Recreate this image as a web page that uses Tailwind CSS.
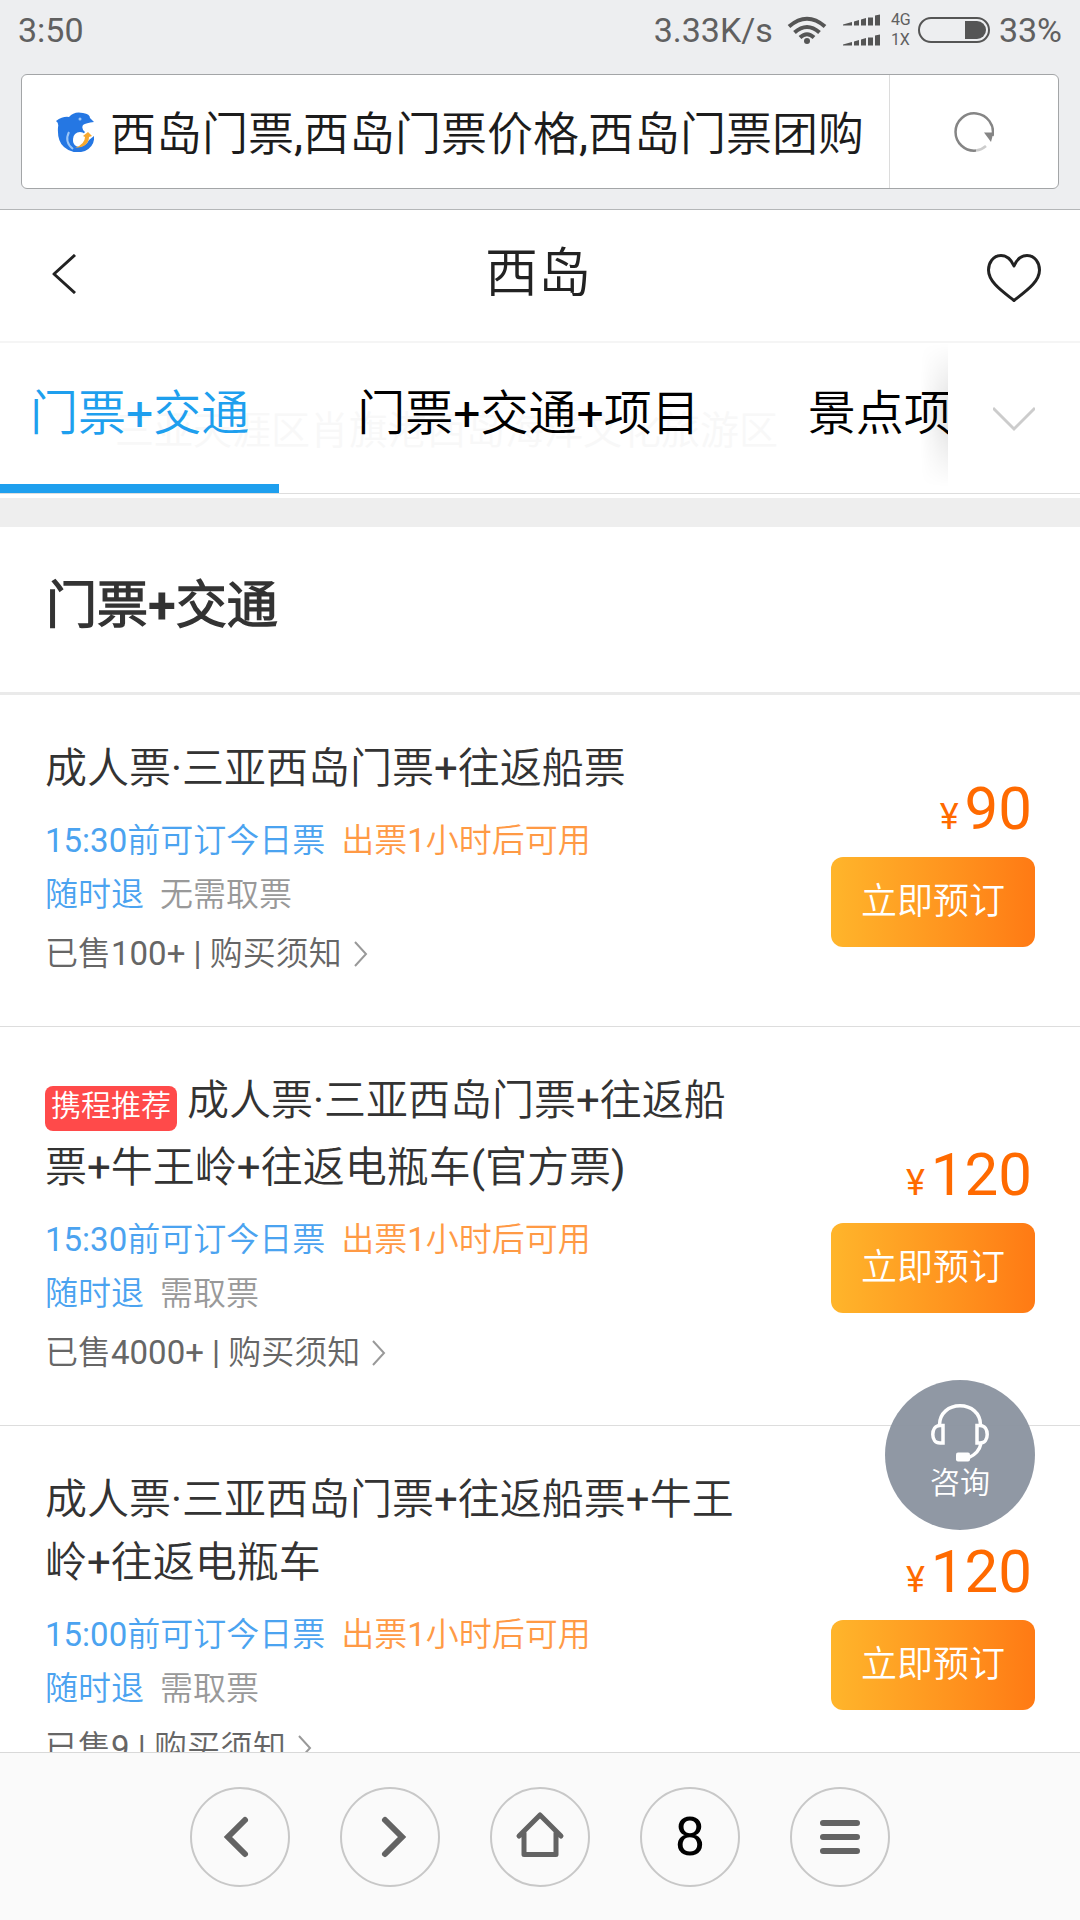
<!DOCTYPE html>
<html lang="zh-CN">
<head>
<meta charset="utf-8">
<meta name="viewport" content="width=device-width, initial-scale=1">
<title>西岛门票,西岛门票价格,西岛门票团购</title>
<script src="https://cdn.jsdelivr.net/npm/@tailwindcss/browser@4"></script>
</head>
<body class="flex h-screen flex-col overflow-hidden bg-white font-['Roboto','Noto_Sans_CJK_SC_DemiLight','Noto_Sans_CJK_SC',sans-serif] font-normal text-[#333]">

<!-- Status bar and address bar -->
<div class="shrink-0 border-b border-[#b4b6b8] bg-[#edeef0] px-[21px] pb-5">
  <div class="-mx-[3px] flex h-[74px] items-start justify-between pt-[10px] text-[34px] leading-10 text-[#606060]">
    <span>3:50</span>
    <div class="flex items-center">
      <span>3.33K/s</span>
      <svg class="ml-[14px] h-7 w-10" viewBox="0 0 40 28" fill="none" stroke="#555" stroke-width="4" aria-label="Wi-Fi">
        <path d="M2 10.500Q20-5 38 10.500M7.500 16.500Q20 5.500 32.500 16.500M13 21.500Q20 15 27 21.500" />
        <circle cx="20" cy="25" r="3" fill="#555" stroke="none" />
      </svg>
      <svg class="ml-4 h-8 w-[38px]" viewBox="0 0 38 32" fill="#555" aria-label="信号">
        <path id="bars" d="M0 10.500L9 8v3.500H0zM11 7.500l5-1.500v5.500h-5zM18 5.500L23 4v7.500h-5zM25 3.500h5v8h-5zM32 1.500L37 .5v11h-5z" />
        <use href="#bars" y="20" />
      </svg>
      <span class="ml-[10px] w-6 text-base leading-5"><span class="block">4G</span><span class="block">1X</span></span>
      <svg class="ml-[3px] h-7 w-[72px]" viewBox="0 0 72 28" aria-label="电池">
        <rect x="1" y="2" width="70" height="24" rx="12" fill="none" stroke="#555" stroke-width="2" />
        <path d="M47 5h12a9 9 0 0 1 0 18H47z" fill="#555" />
      </svg>
      <span class="ml-[9px]">33%</span>
    </div>
  </div>
  <div class="flex h-[115px] overflow-hidden rounded-md border border-[#a3a5a7] bg-white">
    <a href="#" class="flex min-w-0 flex-1 items-center border-r border-[#dcdcdc] pl-[34px] text-[#1c1c1c]">
      <svg class="mr-4 h-10 w-[38px] shrink-0" viewBox="0 0 38 40" aria-hidden="true">
        <path d="M0 9Q7 4 13 5Q18-1 27 1Q34 2 34 6L38 10Q30 11 27 13Q25 17 29 20L25 25Q21 23 17 28Q17 34 23 35Q30 34 33 28L38 24Q39 34 29 39Q17 43 8 35Q1 29 2 15Q3 11 0 9Z" fill="#2577e3" />
        <path d="M13 20Q8 30 17 37" fill="none" stroke="#9cc6f7" stroke-width="2" />
        <circle cx="24" cy="27" r="7" fill="#fff" />
        <path d="M27 24l5-4 4 4-3 1Q33 35 19 36 29 32 29 25z" fill="#f7a82e" />
        <circle cx="24" cy="7" r="1.500" fill="#9cc6f7" />
      </svg>
      <span class="truncate pt-1 text-[46px] leading-[60px]">西岛门票,西岛门票价格,西岛门票团购</span>
    </a>
    <button type="button" class="flex w-[168px] items-center justify-center" aria-label="刷新">
      <svg class="h-10 w-10" viewBox="0 0 40 40" fill="none" stroke="#858585" stroke-width="2.500">
        <path d="M38.500 24A18.700 18.700 0 1 0 22 38.600" />
        <path d="M22 38.600A18.700 18.700 0 0 0 32 34" stroke="#ccc" />
        <path d="M30 20.500h9.500L37 30z" fill="#858585" stroke="none" />
      </svg>
    </button>
  </div>
</div>

<main class="relative min-h-0 flex-1 overflow-hidden">
  <header class="flex h-[133px] items-center justify-between border-b-2 border-[#f5f5f5] px-10 pb-[3px]">
    <button type="button" class="flex h-12 w-12 items-center justify-center" aria-label="返回">
      <svg class="h-10 w-6" viewBox="0 0 24 40" fill="none" stroke="#222" stroke-width="3"><path d="M23 1L2 20l21 19" stroke-linejoin="round" /></svg>
    </button>
    <h1 class="text-[53px] leading-[60px] text-[#222]">西岛</h1>
    <button type="button" class="flex w-[52px] justify-center pt-2" aria-label="收藏">
      <svg class="h-12 w-[54px] shrink-0" viewBox="0 0 54 48" fill="none" stroke="#222" stroke-width="3" stroke-linejoin="round"><path d="M27 12C24 5 19 1.500 14 1.500 6 1.500 1.500 9 1.500 16 1.500 28 15 37 27 46.500 39 37 52.500 28 52.500 16 52.500 9 48 1.500 40 1.500 35 1.500 30 5 27 12z" /></svg>
    </button>
  </header>

  <nav class="relative mb-1 flex h-[151px] border-b border-[#ddd]" aria-label="分类">
    <p class="absolute top-[60px] left-[115px] text-[39px] leading-[56px] whitespace-nowrap text-[#f8f8f8]" aria-hidden="true">三亚天涯区肖旗港西岛海洋文化旅游区</p>
    <div class="relative flex min-w-0 flex-1 gap-12 overflow-hidden text-5xl leading-[141px] whitespace-nowrap text-black">
      <a href="#" class="shrink-0 border-b-9 border-[#1e9fee] px-[30px] text-[#1e9fee]" aria-current="page">门票+交通</a>
      <a href="#" class="shrink-0 px-[30px]">门票+交通+项目</a>
      <a href="#" class="shrink-0 px-[30px]">景点项目</a>
      <span class="absolute top-0 right-0 h-36 w-7 bg-linear-to-l from-black/10 to-transparent mask-y-from-60%"></span>
    </div>
    <button type="button" class="relative flex w-[132px] items-center justify-center" aria-label="展开">
      <svg class="h-7 w-[42px]" viewBox="0 0 42 28" fill="none" stroke="#ccc" stroke-width="3"><path d="M0 4l21 21L42 4" /></svg>
    </button>
  </nav>

  <div class="h-[29px] bg-[#eee]"></div>
  <h2 class="border-b-3 border-[#eaeaea] pt-[46px] pb-[53px] pl-[46px] text-[51px] leading-[66px] font-bold">门票+交通</h2>

  <ul>
    <li class="flex items-center gap-20 border-b border-[#ddd] pr-[45px] pl-[45px]">
      <div class="min-w-0 flex-1 pt-[42px] pb-[45px] text-[33px] leading-[54px]">
        <h3 class="mb-[14px] text-[42px] leading-[63px]">成人票·三亚西岛门票+往返船票</h3>
        <p class="flex gap-4"><span class="text-[#4ba3f0]">15:30前可订今日票</span><span class="text-[#ff9a45]">出票1小时后可用</span></p>
        <p class="flex gap-4"><span class="text-[#4ba3f0]">随时退</span><span class="text-[#999]">无需取票</span></p>
        <p class="mt-[5px] flex items-center text-[#666]">已售100+ |&nbsp;<a href="#" class="flex items-center gap-3">购买须知
          <svg class="h-[26px] w-[14px]" viewBox="0 0 14 26" fill="none" stroke="#999" stroke-width="2"><path d="M1 1l11 12L1 25" /></svg></a></p>
      </div>
      <div class="w-[204px]">
        <p class="mb-[13px] flex h-[70px] items-baseline justify-end gap-[6px] pr-[3px] text-[#ff6a00]"><span class="text-4xl leading-[70px]">¥</span><span class="text-6xl leading-[70px]">90</span></p>
        <button type="button" class="h-[90px] w-full rounded-xl bg-linear-to-r from-[#ffb52b] to-[#ff7a14] text-4xl text-white">立即预订</button>
      </div>
    </li>
    <li class="flex items-center gap-20 border-b border-[#ddd] pr-[45px] pl-[45px]">
      <div class="min-w-0 flex-1 pt-[42px] pb-[45px] text-[33px] leading-[54px]">
        <h3 class="mb-[14px] text-[42px] leading-[63px]"><span class="mr-[10px] mb-[5px] inline-block h-[45px] rounded-lg bg-[#ff4a4a] px-[6px] align-[-1px] text-3xl leading-10 text-white">携程推荐</span>成人票·三亚西岛门票+往返船票+牛王岭+往返电瓶车(官方票)</h3>
        <p class="flex gap-4"><span class="text-[#4ba3f0]">15:30前可订今日票</span><span class="text-[#ff9a45]">出票1小时后可用</span></p>
        <p class="flex gap-4"><span class="text-[#4ba3f0]">随时退</span><span class="text-[#999]">需取票</span></p>
        <p class="mt-[5px] flex items-center text-[#666]">已售4000+ |&nbsp;<a href="#" class="flex items-center gap-3">购买须知
          <svg class="h-[26px] w-[14px]" viewBox="0 0 14 26" fill="none" stroke="#999" stroke-width="2"><path d="M1 1l11 12L1 25" /></svg></a></p>
      </div>
      <div class="w-[204px]">
        <p class="mb-[13px] flex h-[70px] items-baseline justify-end gap-[6px] pr-[3px] text-[#ff6a00]"><span class="text-4xl leading-[70px]">¥</span><span class="text-6xl leading-[70px]">120</span></p>
        <button type="button" class="h-[90px] w-full rounded-xl bg-linear-to-r from-[#ffb52b] to-[#ff7a14] text-4xl text-white">立即预订</button>
      </div>
    </li>
    <li class="flex items-center gap-20 border-b border-[#ddd] pr-[45px] pl-[45px]">
      <div class="min-w-0 flex-1 pt-[42px] pb-[45px] text-[33px] leading-[54px]">
        <h3 class="mb-[14px] text-[42px] leading-[63px]">成人票·三亚西岛门票+往返船票+牛王岭+往返电瓶车</h3>
        <p class="flex gap-4"><span class="text-[#4ba3f0]">15:00前可订今日票</span><span class="text-[#ff9a45]">出票1小时后可用</span></p>
        <p class="flex gap-4"><span class="text-[#4ba3f0]">随时退</span><span class="text-[#999]">需取票</span></p>
        <p class="mt-[5px] flex items-center text-[#666]">已售9 |&nbsp;<a href="#" class="flex items-center gap-3">购买须知
          <svg class="h-[26px] w-[14px]" viewBox="0 0 14 26" fill="none" stroke="#999" stroke-width="2"><path d="M1 1l11 12L1 25" /></svg></a></p>
      </div>
      <div class="w-[204px]">
        <p class="mb-[13px] flex h-[70px] items-baseline justify-end gap-[6px] pr-[3px] text-[#ff6a00]"><span class="text-4xl leading-[70px]">¥</span><span class="text-6xl leading-[70px]">120</span></p>
        <button type="button" class="h-[90px] w-full rounded-xl bg-linear-to-r from-[#ffb52b] to-[#ff7a14] text-4xl text-white">立即预订</button>
      </div>
    </li>
  </ul>

  <!-- Floating help button -->
  <button type="button" class="absolute right-[45px] bottom-[222px] flex size-[150px] flex-col items-center rounded-full bg-[#8a929f]/95 pt-6 text-3xl leading-[42px] text-white">
    <svg class="h-[58px] w-[58px]" viewBox="0 0 58 58" fill="none" stroke="#fff" stroke-width="3.500" aria-hidden="true">
      <path d="M8.500 21C8.500 9 18 1.800 29 1.800S49.500 9 49.500 21" />
      <path d="M12 21.500v17.500H9c-5 0-7.200-4-7.200-8.500s2.200-9 7.200-9zM46 21.500v17.500h3c5 0 7.200-4 7.200-8.500s-2.200-9-7.200-9zM50 39.500Q48 49 38 53.500" />
      <rect x="25" y="48.500" width="14" height="9" rx="2" fill="#fff" stroke="none" />
    </svg>
    咨询
  </button>
</main>

<!-- Browser toolbar -->
<nav class="flex h-[168px] shrink-0 items-center justify-center gap-[50px] border-t border-[#d9d9d9] bg-[#fafafa]" aria-label="浏览器">
  <button type="button" class="flex size-[100px] items-center justify-center rounded-full border-2 border-[#c8c8c8]" aria-label="后退">
    <svg class="size-full" viewBox="0 0 96 96" fill="none" stroke="#636363" stroke-width="6" stroke-linecap="round"><path d="M53 31L36 48l17 17" /></svg>
  </button>
  <button type="button" class="flex size-[100px] items-center justify-center rounded-full border-2 border-[#c8c8c8]" aria-label="前进">
    <svg class="size-full" viewBox="0 0 96 96" fill="none" stroke="#636363" stroke-width="6" stroke-linecap="round"><path d="M43 31l17 17-17 17" /></svg>
  </button>
  <button type="button" class="flex size-[100px] items-center justify-center rounded-full border-2 border-[#c8c8c8]" aria-label="主页">
    <svg class="size-full" viewBox="0 0 96 96" fill="none" stroke="#636363" stroke-width="5" stroke-linecap="round" stroke-linejoin="round"><path d="M27 47l21-21 21 21M32 44v21.500h32V44" /></svg>
  </button>
  <button type="button" class="flex size-[100px] items-center justify-center rounded-full border-2 border-[#c8c8c8] text-[54px] leading-none text-black" aria-label="8 个标签页">8</button>
  <button type="button" class="flex size-[100px] items-center justify-center rounded-full border-2 border-[#c8c8c8]" aria-label="菜单">
    <svg class="size-full" viewBox="0 0 96 96" fill="none" stroke="#636363" stroke-width="6" stroke-linecap="round"><path d="M31 34h34M31 48h34M31 62h34" /></svg>
  </button>
</nav>
</body>
</html>
